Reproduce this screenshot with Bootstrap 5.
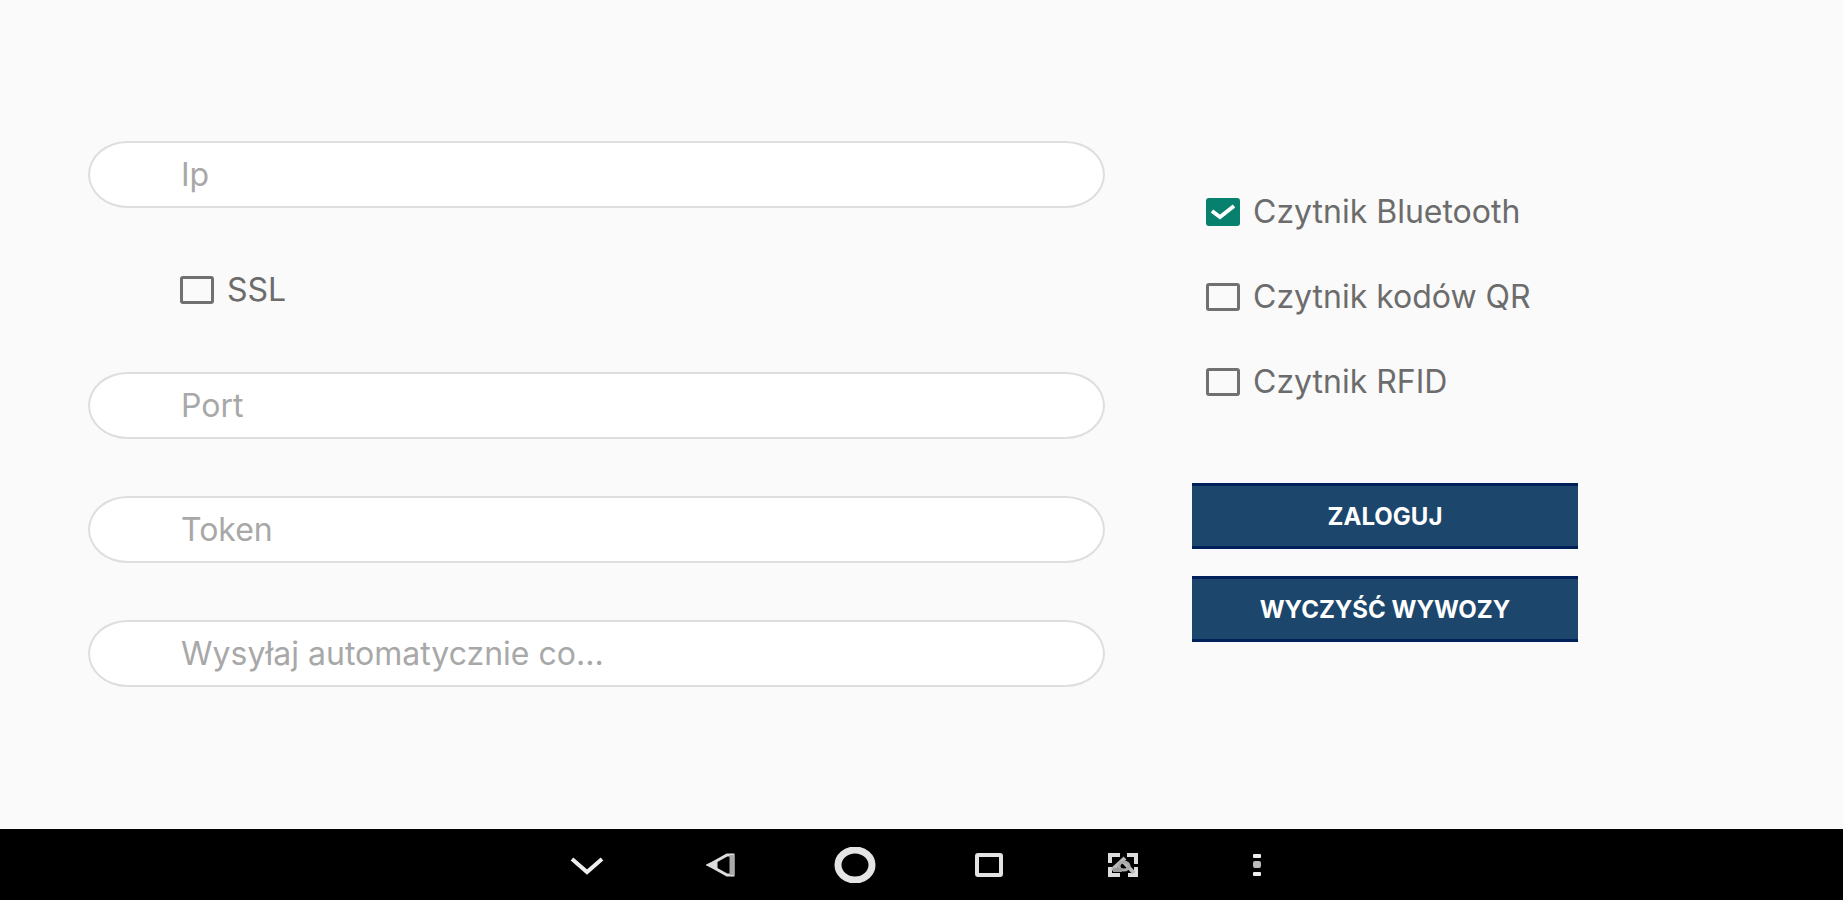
<!DOCTYPE html>
<html lang="pl">
<head>
<meta charset="utf-8">
<meta name="viewport" content="width=device-width, initial-scale=1">
<title>Ustawienia połączenia</title>
<link href="https://cdn.jsdelivr.net/npm/bootstrap@5.3.0/dist/css/bootstrap.min.css" rel="stylesheet">
<style>
  body { background: #fafafa; color: #6c6c6c; font-family: Inter, Roboto, sans-serif; font-size: 32px; line-height: 36px; }
  .settings { display: grid; grid-template-columns: 1017fr 386fr; column-gap: 87px; padding: 141px 265px 0 88px; }
  .pill, .pill:focus { height: 67px; padding: 0 91px; border: 2px solid #dedede; border-radius: 40px / 34px; background: #fff; font-size: 32px; line-height: 36px; color: #606060; }
  .pill::placeholder { color: #a8a8a8; opacity: 1; }
  .pill + .pill { margin-top: 57px; }
  .ssl-row { height: 164px; padding-left: 92px; }
  .option { height: 85px; padding-left: 14px; }
  .options { padding-top: 28px; }
  .option-label { padding-left: 13px; }
  .box.form-check-input { width: 34px; height: 28px; margin: 0; border: 3px solid #707070; border-radius: 3px; background-color: #fafafa; flex: none; }
  .box.form-check-input:checked { border-color: #07806e; background-color: #07806e; background-size: 32px 28px;
    background-image: url("data:image/svg+xml,%3Csvg xmlns='http://www.w3.org/2000/svg' viewBox='0 0 32 28' fill='none' stroke='white' stroke-width='4'%3E%3Cpath d='M5 13l8 6L27 8'/%3E%3C/svg%3E"); }
  .action, .action:hover { height: 66px; padding: 2px 0 0; border: 0 solid #00205c; border-width: 3px 0; border-radius: 0; background: #1d466c; color: #fff; font-size: 24px; line-height: 32px; font-weight: 700; }
  .actions { gap: 27px; margin-top: 59px; }
  .sysbar { height: 71px; background: #000; }
  .sysbar button { width: 134px; height: 71px; }
</style>
</head>
<body class="min-vh-100 d-flex flex-column">
<main class="flex-grow-1">
  <form class="settings">
    <div>
      <input class="form-control pill" type="text" placeholder="Ip" aria-label="Ip">
      <div class="ssl-row d-flex align-items-center">
        <input class="form-check-input box" type="checkbox" id="ssl">
        <label class="option-label" for="ssl">SSL</label>
      </div>
      <input class="form-control pill" type="text" placeholder="Port" aria-label="Port">
      <input class="form-control pill" type="text" placeholder="Token" aria-label="Token">
      <input class="form-control pill" type="text" placeholder="Wysyłaj automatycznie co..." aria-label="Wysyłaj automatycznie co">
    </div>
    <div class="options">
      <div class="option d-flex align-items-center">
        <input class="form-check-input box" type="checkbox" id="bt" checked>
        <label class="option-label" for="bt">Czytnik Bluetooth</label>
      </div>
      <div class="option d-flex align-items-center">
        <input class="form-check-input box" type="checkbox" id="qr">
        <label class="option-label" for="qr">Czytnik kodów QR</label>
      </div>
      <div class="option d-flex align-items-center">
        <input class="form-check-input box" type="checkbox" id="rfid">
        <label class="option-label" for="rfid">Czytnik RFID</label>
      </div>
      <div class="actions d-grid">
        <button class="btn action" type="button">ZALOGUJ</button>
        <button class="btn action" type="button">WYCZYŚĆ WYWOZY</button>
      </div>
    </div>
  </form>
</main>
<nav class="sysbar d-flex justify-content-center" aria-label="System">
  <button class="btn p-0 border-0" type="button" aria-label="Ukryj">
    <svg width="34" height="20" viewBox="0 0 34 20" fill="none" stroke="#eee" stroke-width="4"><path d="M2 3l15 13L32 3"/></svg>
  </button>
  <button class="btn p-0 border-0" type="button" aria-label="Wstecz">
    <svg width="30" height="24" viewBox="0 0 30 24" fill="none" stroke="#ddd" stroke-width="3"><path d="M27 2h-6L3 12l18 10h6z"/><path d="M26 2v20" stroke="#aaa" stroke-width="5"/><path d="M3 12l7-3v6z" fill="#ddd"/></svg>
  </button>
  <button class="btn p-0 border-0" type="button" aria-label="Ekran główny">
    <svg width="44" height="36" viewBox="0 0 44 36" fill="none" stroke="#e4e4e4"><ellipse cx="22" cy="18" rx="17" ry="15" stroke-width="7"/></svg>
  </button>
  <button class="btn p-0 border-0" type="button" aria-label="Ostatnie">
    <svg width="28" height="24" viewBox="0 0 28 24" fill="none" stroke="#e4e4e4" stroke-width="4"><rect x="2" y="2" width="24" height="20" rx="1"/></svg>
  </button>
  <button class="btn p-0 border-0" type="button" aria-label="Zrzut ekranu">
    <svg width="30" height="24" viewBox="0 0 30 24" fill="none" stroke="#ddd" stroke-width="4"><path d="M2 10V2h10M19 2h9v9M28 14v8h-8M12 22H2v-8"/><path d="M4 17L17 5M13 6l13 14" stroke="#bbb"/><ellipse cx="16" cy="13" rx="5" ry="4" stroke="#aaa" stroke-width="3"/><path d="M5 17h9" stroke="#999"/></svg>
  </button>
  <button class="btn p-0 border-0" type="button" aria-label="Więcej">
    <svg width="8" height="24" viewBox="0 0 8 24" fill="#eee"><rect y="1" width="8" height="4" rx="1"/><rect y="8" width="8" height="7" rx="2" fill="#bbb"/><rect y="19" width="8" height="4" rx="1"/></svg>
  </button>
</nav>
<script src="https://cdn.jsdelivr.net/npm/bootstrap@5.3.0/dist/js/bootstrap.bundle.min.js"></script>
</body>
</html>
